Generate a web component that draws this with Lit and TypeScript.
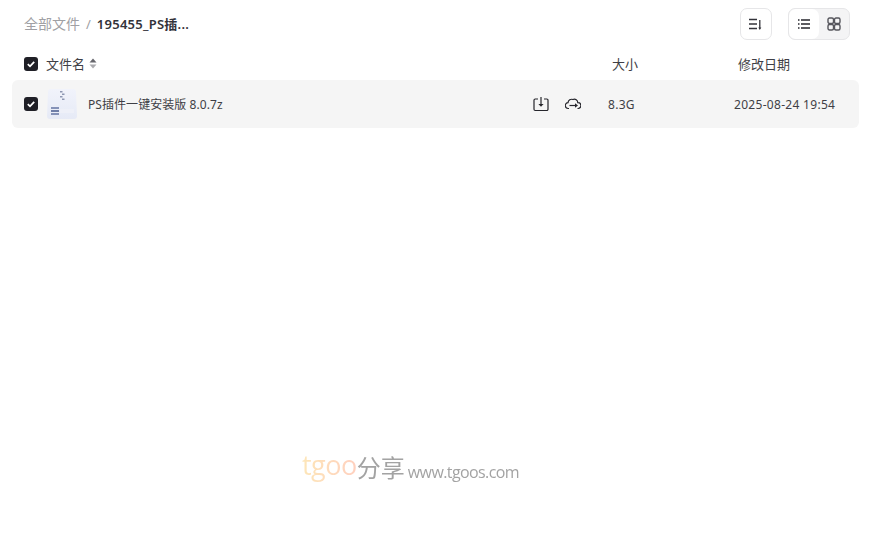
import { LitElement, html, css } from "lit";
import { customElement } from "lit/decorators.js";

const check = html`<span class="cb"><svg width="14" height="14" viewBox="0 0 14 14"><path d="M3.800 7.200 6 9.300 10.200 4.900" fill="none" stroke="#fff" stroke-width="1.800"/></svg></span>`;

@customElement("app-root")
export class AppRoot extends LitElement {
  static styles = css`
    :host { display: block; position: relative; width: 874px; height: 538px; background: #fff; overflow: hidden;
      font-family: "Noto Sans", "Noto Sans CJK SC", sans-serif; font-size: 12px; color: #3f3f46; }
    .top { display: flex; align-items: center; justify-content: space-between; height: 48px; padding: 0 24px; }
    .crumbs { display: flex; align-items: center; font-size: 14px; line-height: 20px; margin-top: -1px; }
    .root { color: #a0a0a4; }
    .sep { color: #a0a0a4; margin: 0 6px 0 6px; font-size: 13px; }
    .cur { color: #33333a; font-weight: 600; font-size: 13px; letter-spacing: .25px; }
    .tools { display: flex; gap: 16px; }
    .btn { box-sizing: border-box; width: 32px; height: 32px; border: 1px solid #e6e6e8; border-radius: 7px; display: flex; align-items: center; justify-content: center; background: #fff; }
    .seg { box-sizing: border-box; display: flex; width: 62px; height: 32px; border: 1px solid #e6e6e8; border-radius: 7px; background: #f4f4f5; overflow: hidden; }
    .seg span { flex: 1; display: flex; align-items: center; justify-content: center; }
    .seg .on { background: #fff; border-radius: 7px; }
    .cb { width: 14px; height: 14px; border-radius: 3px; background: #1f1f26; display: block; flex: none; }
    .cb svg { display: block; }
    .head { display: grid; grid-template-columns: 22px 566px 126px 1fr; align-items: center; height: 32px; padding-left: 24px; font-size: 13px; line-height: 18px; }
    .namecol { display: flex; align-items: center; gap: 4px; margin-top: -1px; }
    .lab { margin-top: -1px; }
    .row { display: flex; align-items: center; height: 48px; margin: 0 15px 0 12px; padding: 0 12px; background: #f5f5f5; border-radius: 6px; }
    .thumb { margin-left: 9px; flex: none; display: block; }
    .name { margin-left: 11px; width: 445px; flex: none; letter-spacing: .06px; }
    .act { display: flex; gap: 16px; width: 75px; flex: none; align-items: center; }
    .act svg { display: block; }
    .rsize { width: 126px; flex: none; letter-spacing: .3px; }
    .date { letter-spacing: .3px; }
    .mark { position: absolute; left: 302px; top: 446px; display: flex; align-items: baseline; white-space: nowrap; font-family: "Open Sans", "Noto Sans CJK SC", sans-serif; filter: blur(.3px); }
    .mark .t { font-size: 27px; letter-spacing: -.5px; background: linear-gradient(90deg, #fde6b8, #ffd0bf); -webkit-background-clip: text; background-clip: text; color: transparent; font-weight: 400; }
    .mark .f { font-size: 24px; color: #a3a3a3; transform: translateY(2px); }
    .mark .u { font-size: 16px; color: #a3a3a3; margin-left: 3px; letter-spacing: -.6px; transform: translateY(3px); }
  `;

  render() {
    return html`
      <div class="top">
        <div class="crumbs"><span class="root">全部文件</span><span class="sep">/</span><span class="cur">195455_PS插...</span></div>
        <div class="tools">
          <div class="btn">
            <svg width="16" height="16" viewBox="0 0 16 16" fill="none" stroke="#33333a" stroke-width="1.300"><path d="M1 3.500h8M1 8h8M1 12.500h8M11.800 4v8.500"/><path d="M10.300 11.500 11.800 14l1.500-2.500z" fill="#33333a" stroke="none"/></svg>
          </div>
          <div class="seg">
            <span class="on"><svg width="14" height="14" viewBox="0 0 14 14" fill="none" stroke="#26262c" stroke-width="1.300"><path d="M1 3h1.500M1 7h1.500M1 11h1.500M4 3h9M4 7h9M4 11h9"/></svg></span>
            <span><svg width="14" height="14" viewBox="0 0 14 14" fill="none" stroke="#55555c" stroke-width="1.400"><rect x="1" y="1" width="5.500" height="5.500" rx="1.500"/><rect x="7.500" y="1" width="5.500" height="5.500" rx="1.500"/><rect x="1" y="7.500" width="5.500" height="5.500" rx="1.500"/><rect x="7.500" y="7.500" width="5.500" height="5.500" rx="1.500"/></svg></span>
          </div>
        </div>
      </div>
      <div class="head">
        ${check}
        <div class="namecol">文件名
          <svg width="8" height="11" viewBox="0 0 8 11"><path d="M4 .5 7.500 4.600H.5z" fill="#66666c"/><path d="M4 10.500.5 6.400h7z" fill="#aaaaae"/></svg>
        </div>
        <div class="lab">大小</div>
        <div class="lab">修改日期</div>
      </div>
      <div class="row">
        ${check}
        <svg class="thumb" width="30" height="30" viewBox="0 0 30 30">
          <defs><linearGradient id="g" x1="0" y1="0" x2="0" y2="1"><stop offset="0" stop-color="#f1f3fb"/><stop offset="1" stop-color="#e6eaf6"/></linearGradient></defs>
          <path d="M4 0h22a3 3 0 0 1 3 3l1 24a3 3 0 0 1-3 3H3a3 3 0 0 1-3-3L1 3a3 3 0 0 1 3-3z" fill="url(#g)"/>
          <path d="M13 2h2.500v1.500H13zM15 4.500h2.500V6H15zM13 7h2.500v1.500H13zM15 9.500h2.500V11H15z" fill="#8e97b2"/>
          <rect x="4" y="18" width="8" height="2" fill="#8592b8"/><rect x="4" y="21" width="8" height="2" fill="#6f7ea8"/><rect x="4" y="24" width="8" height="2" fill="#8592b8"/>
          <rect x="13" y="20" width="14" height="4" fill="#eef0f8"/>
        </svg>
        <div class="name">PS插件一键安装版 8.0.7z</div>
        <div class="act">
          <svg width="16" height="16" viewBox="0 0 16 16" fill="none" stroke="#25252b" stroke-width="1.200"><path d="M5 3H2.200A1.200 1.200 0 0 0 1 4.200v9.100a1.200 1.200 0 0 0 1.200 1.200h11.600a1.200 1.200 0 0 0 1.200-1.200V4.200A1.200 1.200 0 0 0 13.800 3H11"/><path d="M8 1v7.500"/><path d="M5.400 8h5.200L8 10.800z" fill="#25252b" stroke="none"/></svg>
          <svg width="16" height="16" viewBox="0 0 16 16" fill="none" stroke="#25252b" stroke-width="1.200"><path d="M4 12.500H3.400A2.900 2.900 0 0 1 3 6.700 3.700 3.700 0 0 1 8 3.500a3.500 3.500 0 0 1 4.800 3.200 2.900 2.900 0 0 1 .4 5.800H12.500"/><path d="M4.500 9.500h6"/><path d="M10 7.200v4.600l3-2.300z" fill="#25252b" stroke="none"/></svg>
        </div>
        <div class="rsize">8.3G</div>
        <div class="date">2025-08-24 19:54</div>
      </div>
      <div class="mark"><span class="t">tgoo</span><span class="f">分享</span><span class="u">www.tgoos.com</span></div>
    `;
  }
}
